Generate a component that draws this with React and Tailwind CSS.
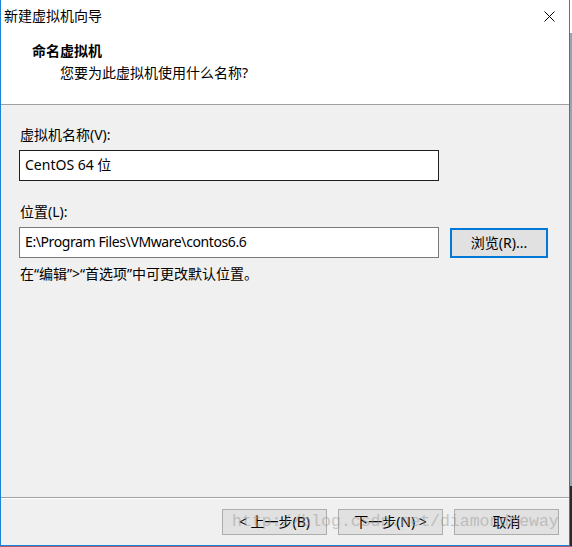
const ui = { fontFamily: '"Noto Sans", "Noto Sans CJK SC", sans-serif' };

function WinButton({ children, focused = false }) {
  return (
    <button
      className={`h-[26px] bg-[#e1e1e1] text-[14px] leading-none text-black flex items-center justify-center ${
        focused ? 'w-[98px] h-[30px] border-2 border-[#0078d7]' : 'w-[105px] border border-[#adadad]'
      }`}
      style={ui}
    >
      {children}
    </button>
  );
}

export default function App() {
  return (
    <div className="w-[572px] h-[547px] flex flex-col bg-[#b45a6e]" style={ui}>
      <div className="flex h-[546px]">
        {/* dialog window */}
        <div className="w-[570px] h-[546px] flex flex-col border-x border-b border-[#1883d7] bg-[#f0f0f0]">
          {/* title bar + header */}
          <div className="bg-white h-[104px] flex flex-col">
            <div className="h-[32px] flex items-center justify-between">
              <span className="pl-[3px] text-[14px] text-black leading-[20px]">新建虚拟机向导</span>
              <div className="w-[40px] h-[32px] flex items-center justify-center">
                <svg width="11" height="11" viewBox="0 0 11 11">
                  <path d="M0.5 0.5 L10.5 10.5 M10.5 0.5 L0.5 10.5" stroke="#000" strokeWidth="1" />
                </svg>
              </div>
            </div>
            <div className="pl-[31px] mt-[9px] text-[14px] font-bold leading-[20px] text-black">命名虚拟机</div>
            <div className="pl-[59px] mt-[2px] text-[14px] leading-[20px] text-black">您要为此虚拟机使用什么名称?</div>
          </div>
          <div className="h-px bg-[#a0a0a0]" />

          {/* body */}
          <div className="flex-1 px-[18px] pt-[20px] text-[14px] text-black">
            <div className="pl-px leading-[20px]">虚拟机名称(V):</div>
            <div className="mt-[5px] w-[420px] h-[31px] bg-white border border-[#1e1e1e] flex items-center pl-[5px] pb-[3px]">
              CentOS 64 位
            </div>
            <div className="pl-px mt-[21px] leading-[20px]">位置(L):</div>
            <div className="mt-[5px] flex items-center gap-[11px]">
              <div className="w-[420px] h-[31px] bg-white border border-[#7a7a7a] flex items-center pl-[5px] pb-[2px] tracking-[-0.4px]">
                E:\Program Files\VMware\contos6.6
              </div>
              <WinButton focused>浏览(R)...</WinButton>
            </div>
            <div className="pl-px mt-[6px] leading-[20px]">在“编辑”&gt;“首选项”中可更改默认位置。</div>
          </div>

          {/* footer */}
          <div className="h-px bg-[#a0a0a0]" />
          <div className="h-px bg-white" />
          <div className="relative h-[46px] flex items-start justify-end gap-[11px] pt-[10px] pr-[10px]">
            <WinButton>&lt; 上一步(B)</WinButton>
            <WinButton>下一步(N) &gt;</WinButton>
            <WinButton>取消</WinButton>
            <span
              className="absolute left-[231px] top-[13px] text-[16.5px] leading-[20px] text-[#9a9a9a] opacity-50 pointer-events-none whitespace-nowrap"
              style={{ fontFamily: '"Liberation Mono", monospace' }}
            >
              http://blog.csdn.net/diamondmeway
            </span>
          </div>
        </div>
        {/* desktop strip behind window */}
        <div className="w-[2px] flex flex-col">
          <div className="h-[33px] bg-white" />
          <div className="flex-1 bg-[#9aa4ae]" />
          <div className="h-[60px] bg-[#2a2a2a]" />
        </div>
      </div>
    </div>
  );
}
